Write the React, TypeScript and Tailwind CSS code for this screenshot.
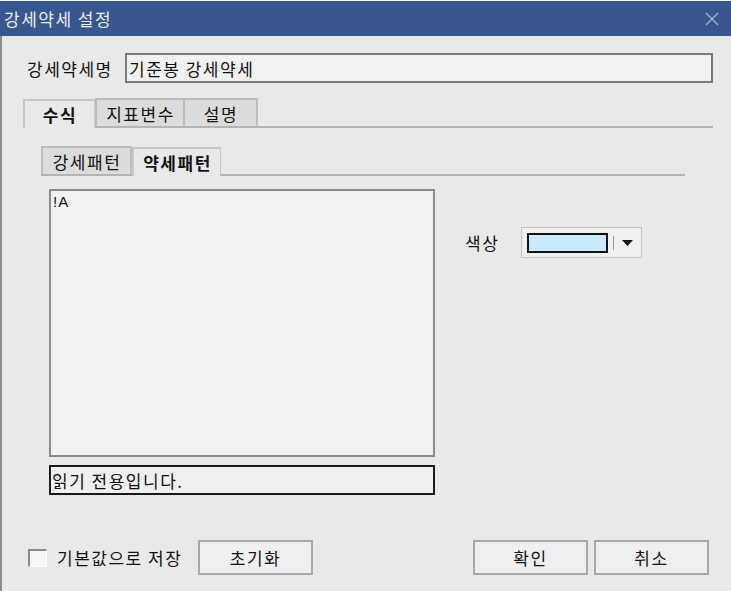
// 강세약세 설정 dialog
import React from "react";

const KR = "font-['Noto_Sans_CJK_KR','Noto_Sans',sans-serif]";
const TXT = "text-[17px] leading-none tracking-[1.5px] text-[#111]";

function Tab({ active, children, className = "" }: { active?: boolean; children: React.ReactNode; className?: string }) {
  return (
    <div
      className={[
        "flex items-center justify-center pl-[1px]",
        TXT,
        active
          ? "bg-[#e9e9e9] border-l-2 border-t-2 border-r border-[#c8c8c8] -mb-[2px] relative z-10 font-bold"
          : "bg-[#dcdcdc] border-2 border-[#bdbdbd] border-b-0",
        className,
      ].join(" ")}
    >
      {children}
    </div>
  );
}

function Btn({ children, className = "" }: { children: React.ReactNode; className?: string }) {
  return (
    <button
      className={`h-[35px] w-[115px] bg-[#efefef] border-2 border-[#a9a9a9] ${TXT} flex items-center justify-center ${className}`}
    >
      {children}
    </button>
  );
}

export default function App() {
  return (
    <div className={`w-[731px] h-[591px] bg-[#e9e9e9] ${KR} overflow-hidden flex flex-col`}>
      <div className="h-[1px] bg-[#f4f4f4]" />
      {/* title bar */}
      <div className="h-[35px] bg-[#38568f] flex items-center justify-between pl-[4px] pr-[12px] shrink-0">
        <span className="text-[17px] leading-none text-[#e8ecf4] tracking-[1.5px]">강세약세 설정</span>
        <svg width="14" height="14" viewBox="0 0 14 14" className="stroke-[#9fb0cf]">
          <path d="M1 1 L13 13 M13 1 L1 13" strokeWidth="1.3" fill="none" />
        </svg>
      </div>

      <div className="flex-1 border-l-2 border-[#8c8c8c] relative">
        {/* name row */}
        <div className="flex items-center mt-[17px] pl-[25px]">
          <span className={`w-[98px] ${TXT}`}>강세약세명</span>
          <div className={`w-[588px] h-[30px] bg-[#f1f1f1] border-2 border-[#7a7a7a] flex items-center pl-[2px] ${TXT}`}>
            기준봉 강세약세
          </div>
        </div>

        {/* main tabs */}
        <div className="ml-[21px] mt-[16px] w-[690px] flex items-end h-[29px] border-b-2 border-[#b4b4b4]">
          <Tab active className="w-[72px] h-[29px]">수식</Tab>
          <Tab className="w-[90px] h-[28px]">지표변수</Tab>
          <Tab className="w-[73px] h-[28px] border-l-0">설명</Tab>
        </div>

        {/* sub tabs */}
        <div className="ml-[39px] mt-[19px] w-[644px] flex items-end h-[29px] border-b-2 border-[#b4b4b4]">
          <Tab className="w-[91px] h-[28px]">강세패턴</Tab>
          <Tab active className="w-[89px] h-[29px] border-l-0">약세패턴</Tab>
        </div>

        <div className="flex mt-[13px] ml-[47px]">
          <div className="flex flex-col w-[386px]">
            <div className="h-[268px] bg-[#f1f1f1] border-2 border-[#8a8a8a] pl-[2px] pt-[3px] font-['Liberation_Sans',sans-serif] text-[15px] leading-[16px] tracking-[1px] text-[#111]">
              !A
            </div>
            <div className={`mt-[8px] h-[30px] bg-[#f0f0f0] border-2 border-[#1a1a1a] flex items-center pl-[1px] ${TXT}`}>
              읽기 전용입니다.
            </div>
          </div>

          <div className="ml-[30px] mt-[38px] flex items-center h-[31px]">
            <span className={`${TXT} w-[56px]`}>색상</span>
            <div className="w-[121px] h-[31px] bg-[#f0f0f0] border border-[#c4c4c4] flex items-center pl-[5px]">
              <div className="w-[81px] h-[20px] bg-[#cce8ff] border-2 border-[#111]" />
              <div className="ml-[5px] w-[1px] h-[14px] bg-[#9a9a9a]" />
              <svg width="11" height="6" viewBox="0 0 11 6" className="ml-[8px]">
                <path d="M0 0 H11 L5.5 6 Z" fill="#111" />
              </svg>
            </div>
          </div>
        </div>

        {/* bottom row */}
        <div className="absolute left-[26px] right-[22px] top-[504px] flex items-center">
          <div className="w-[19px] h-[18px] bg-[#f6f6f6] border-l-2 border-t-2 border-[#8a8a8a] border-r border-b border-r-[#ffffff] border-b-[#ffffff]" />
          <span className={`ml-[10px] w-[141px] whitespace-nowrap ${TXT}`}>기본값으로 저장</span>
          <Btn>초기화</Btn>
          <Btn className="ml-auto">확인</Btn>
          <Btn className="ml-[6px]">취소</Btn>
        </div>
      </div>
    </div>
  );
}
